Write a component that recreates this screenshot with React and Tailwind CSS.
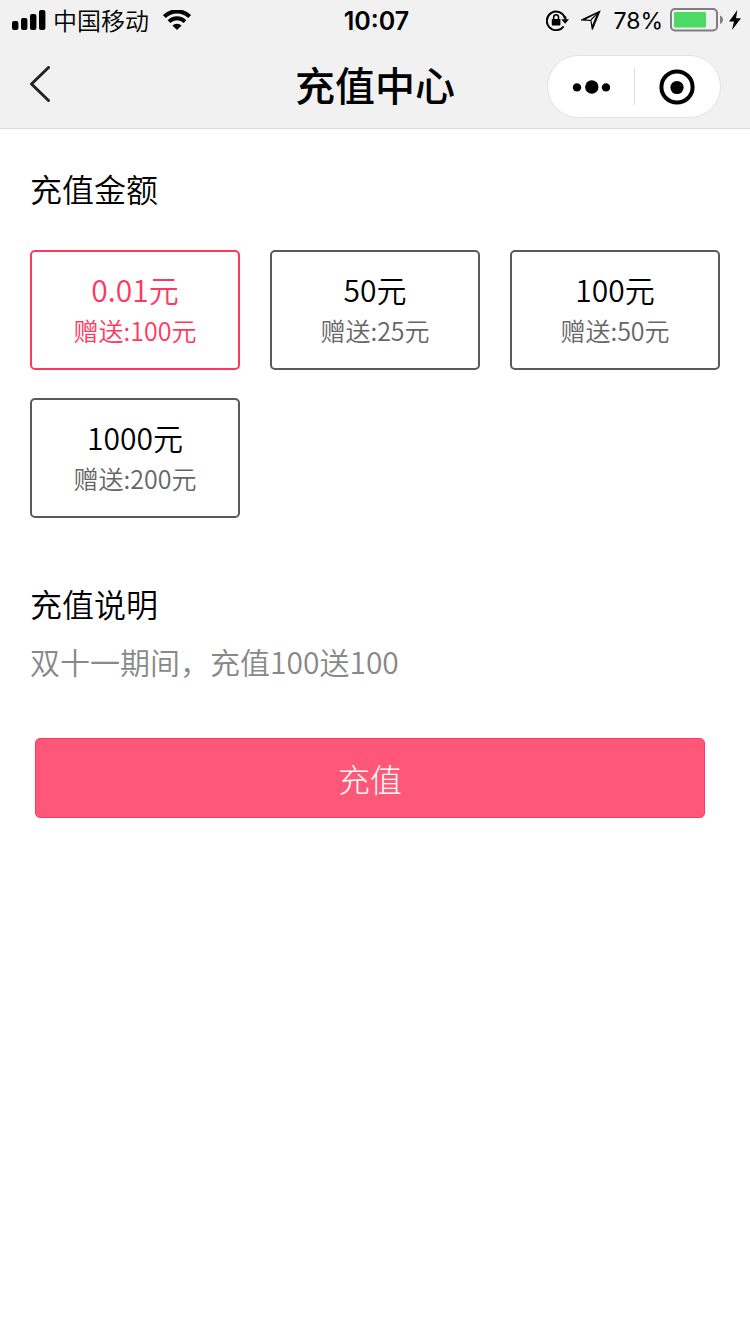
import React, { useState } from 'react';

const PLANS = [
  { id: 1, amount: '0.01', gift: 100 },
  { id: 2, amount: '50', gift: 25 },
  { id: 3, amount: '100', gift: 50 },
  { id: 4, amount: '1000', gift: 200 },
];

function SignalIcon() {
  return (
    <svg className="w-[34px] h-[20px]" viewBox="0 0 34 20">
      <rect x="0" y="11" width="6.4" height="9" rx="2" />
      <rect x="9" y="8" width="6.4" height="12" rx="2" />
      <rect x="18" y="4" width="6.4" height="16" rx="2" />
      <rect x="27" y="0" width="6.4" height="20" rx="2" />
    </svg>
  );
}

function WifiIcon() {
  return (
    <svg className="w-[28px] h-[20px]" viewBox="0 0 28 20">
      <path d="M1.4 6.6a17.8 17.8 0 0 1 25.2 0" fill="none" stroke="#000" strokeWidth="4.2" />
      <path d="M6 11.6a11.2 11.2 0 0 1 16 0" fill="none" stroke="#000" strokeWidth="3.8" />
      <path d="M9.4 15.6a6.6 6.6 0 0 1 9.2 0L14 20z" />
    </svg>
  );
}

function RotationLockIcon() {
  return (
    <svg className="w-[23px] h-[21px]" viewBox="0 0 23 21">
      <path d="M17.6 16.4A9.300 9.300 0 1 1 18.900 7.800" fill="none" stroke="#000" strokeWidth="2" />
      <path d="M15.200 9.200H23l-3.900 4.600z" />
      <path d="M18.200 6.600h2l.4 3h-2.400z" />
      <rect x="5.800" y="9" width="8.600" height="6.400" rx=".6" />
      <path d="M7.700 9.400V7.200a2.400 2.400 0 0 1 4.800 0v2.200" fill="none" stroke="#000" strokeWidth="1.600" />
    </svg>
  );
}

function LocationIcon() {
  return (
    <svg className="w-[20px] h-[20px]" viewBox="0 0 20 20">
      <path d="M19.800.2 0 9.400v1.200l9.400.4 1.400 8.800h1zM16.200 3.600 11.200 15l-.8-5L4.600 9.400z" fillRule="evenodd" />
      <path d="M17.600 2.400 10 9.800" fill="none" stroke="#000" strokeWidth="1.200" />
    </svg>
  );
}

function BatteryIcon() {
  return (
    <svg className="w-[53px] h-[24px]" viewBox="0 0 53 24">
      <rect x="1" y="1" width="46" height="21.400" rx="4" fill="none" stroke="#7f7f7f" strokeWidth="2" />
      <rect x="4" y="4" width="32" height="15.400" rx="1" fill="#4cd964" />
      <path d="M50 7.600c2 .8 3 2.400 3 4.200s-1 3.400-3 4.200z" fill="#7f7f7f" />
    </svg>
  );
}

function BoltIcon() {
  return (
    <svg className="w-[12px] h-[20px]" viewBox="0 0 12 20">
      <path d="M8.400 0 0 11.400h5L3 20 12 8.200H7z" />
    </svg>
  );
}

function StatusBar() {
  return (
    <div className="grid grid-cols-[1fr_auto_1fr] items-center h-10 pl-3 pr-[9px] text-[24px] leading-9">
      <div className="flex items-center">
        <SignalIcon />
        <span className="ml-[7px] mr-[14px] font-[350]">中国移动</span>
        <WifiIcon />
      </div>
      <time className="font-['Inter'] text-[25px] font-semibold pt-0.5">10:07</time>
      <div className="flex items-center justify-end">
        <RotationLockIcon />
        <span className="ml-3 mr-3"><LocationIcon /></span>
        <span className="font-['Inter'] text-[23px] mr-[7px] pt-0.5">78%</span>
        <BatteryIcon />
        <span className="ml-[6px]"><BoltIcon /></span>
      </div>
    </div>
  );
}

function NavBar() {
  return (
    <div className="grid grid-cols-[1fr_auto_1fr] items-center h-[88px] px-[29px]">
      <button type="button" aria-label="返回" className="justify-self-start">
        <svg className="w-[22px] h-[36px]" viewBox="0 0 22 36">
          <path d="M19.500 1.500 2.500 18l17 16.500" fill="none" stroke="#222" strokeWidth="3" strokeLinecap="round" strokeLinejoin="round" />
        </svg>
      </button>
      <h1 className="text-[40px] leading-[48px] font-medium">充值中心</h1>
      <div className="justify-self-end self-end mb-[10px] flex items-center w-[174px] h-[63px] rounded-full bg-white border border-[#e2e2e2]">
        <button type="button" aria-label="更多" className="flex-1 flex justify-center">
          <svg className="w-[38px] h-[14px]" viewBox="-1 0 38 14">
            <circle cx="4" cy="7.400" r="4.200" />
            <circle cx="18.800" cy="7" r="6.700" />
            <circle cx="33" cy="7.400" r="4.200" />
          </svg>
        </button>
        <span className="w-px h-[37px] bg-[#dcdcdc]" />
        <button type="button" aria-label="关闭" className="flex-1 flex justify-center">
          <svg className="w-[36px] h-[36px]" viewBox="0 0 36 36">
            <circle cx="18" cy="18" r="15.600" fill="none" stroke="#000" strokeWidth="4" />
            <circle cx="18" cy="18.500" r="6.600" />
          </svg>
        </button>
      </div>
    </div>
  );
}

function PlanCard({ plan, active, onSelect }) {
  return (
    <button
      type="button"
      aria-pressed={active}
      onClick={onSelect}
      className={
        active
          ? 'flex flex-col items-center justify-center h-[120px] rounded-[5px] border-2 border-[#ff3860] text-[#ff3860] font-[350]'
          : 'flex flex-col items-center justify-center h-[120px] rounded-[5px] border-2 border-[#595959] text-black font-[350]'
      }
    >
      <span className="text-[30px] leading-10">{plan.amount}元</span>
      <span className={active ? 'text-[25px] leading-[42px]' : 'text-[25px] leading-[42px] text-[#666]'}>
        赠送:{plan.gift}元
      </span>
    </button>
  );
}

export default function App() {
  const [selected, setSelected] = useState(1);

  return (
    <div className="min-h-screen bg-white text-black font-['Noto_Sans_CJK_SC',sans-serif]">
      <header className="bg-[#f1f1f1] border-b border-[#dadada]">
        <StatusBar />
        <NavBar />
      </header>
      <main className="px-[30px] pt-[35px]">
        <section>
          <h2 className="text-[32px] leading-[48px] font-[350]">充值金额</h2>
          <div className="grid grid-cols-3 gap-x-[30px] gap-y-7 mt-[38px]">
            {PLANS.map(p => (
              <PlanCard key={p.id} plan={p} active={p.id === selected} onSelect={() => setSelected(p.id)} />
            ))}
          </div>
        </section>
        <section className="mt-[61px]">
          <h2 className="text-[32px] leading-[48px] font-[350]">充值说明</h2>
          <p className="mt-3 text-[30px] leading-[44px] text-[#888] font-[350]">双十一期间，充值100送100</p>
        </section>
        <button
          type="button"
          className="block h-20 mt-[55px] ml-[5px] w-[calc(100%-20px)] rounded-[5px] border border-[#ff3860] bg-[#ff5777] text-white text-[32px] leading-[78px] font-light"
        >
          充值
        </button>
      </main>
    </div>
  );
}
